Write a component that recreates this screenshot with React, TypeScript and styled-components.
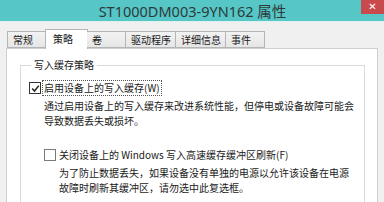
import React from "react";
import styled, { createGlobalStyle } from "styled-components";

const GlobalStyle = createGlobalStyle`
  html, body {
    margin: 0;
    padding: 0;
    width: 384px;
    height: 202px;
    overflow: hidden;
    background: #f0f0f0;
  }
  body {
    font-family: "Noto Sans CJK SC", "Noto Sans", sans-serif;
  }
`;

const Window = styled.div`
  width: 384px;
  height: 202px;
  display: flex;
  flex-direction: column;
  background: #f0f0f0;
  overflow: hidden;
`;

const TitleBar = styled.div`
  height: 21px;
  flex-shrink: 0;
  background: #56c6c7;
  border-bottom: 1px solid #dff0f0;
  position: relative;
  display: flex;
  justify-content: center;
  align-items: center;
`;

const Title = styled.div`
  font-family: "Noto Sans", "Noto Sans CJK SC", sans-serif;
  font-size: 14.5px;
  color: #2e3a3a;
  line-height: 21px;
  white-space: nowrap;
  padding: 2px 0 0 1px;
`;

const CloseButton = styled.div`
  position: absolute;
  top: 0;
  right: 0;
  width: 23px;
  height: 14px;
  background: #c94a4c;
  color: #fff;
  font-family: "DejaVu Sans", sans-serif;
  font-size: 10px;
  line-height: 14px;
  text-align: center;
`;

const TabStrip = styled.div`
  display: flex;
  align-items: flex-end;
  padding: 0 0 0 7px;
  margin-top: 7px;
  position: relative;
  z-index: 1;
`;

const Tab = styled.div<{ $active?: boolean }>`
  box-sizing: border-box;
  min-width: ${(p) => (p.$active ? "43px" : "39px")};
  height: ${(p) => (p.$active ? "20px" : "17px")};
  padding: 0 4px 0 ${(p) => (p.$active ? "7px" : "5px")};
  margin: ${(p) => (p.$active ? "0 -1px -1px" : "0")};
  background: ${(p) =>
    p.$active ? "#ffffff" : "linear-gradient(#f2f2f2, #e6e6e6)"};
  border: 1px solid #b5b5b5;
  border-bottom: ${(p) => (p.$active ? "none" : "1px solid #b5b5b5")};
  border-left-width: ${(p) => (p.$active ? "1px" : "0")};
  &:first-child {
    border-left-width: 1px;
  }
  font-size: 10px;
  color: #1a1a1a;
  line-height: ${(p) => (p.$active ? "17px" : "15px")};
  white-space: nowrap;
  display: flex;
  align-items: ${(p) => (p.$active ? "flex-start" : "center")};
`;

const Panel = styled.div`
  flex: 1;
  margin: 0 6px;
  background: #ffffff;
  border: 1px solid #cfcfcf;
  padding: 10px 12px 0 13px;
`;

const GroupBox = styled.fieldset`
  margin: 0;
  padding: 10px 0 0 8px;
  border: 1px solid #dadada;
  min-height: 200px;
`;

const Legend = styled.legend`
  font-size: 10px;
  color: #1a1a1a;
  padding: 0 3px;
  margin-left: 2px;
  line-height: 12px;
`;

const Option = styled.div<{ $indent?: number; $top?: number }>`
  display: flex;
  flex-direction: column;
  margin-left: ${(p) => p.$indent ?? 0}px;
  margin-top: ${(p) => p.$top ?? 0}px;
`;

const CheckRow = styled.label`
  display: flex;
  align-items: center;
  gap: 2px;
  font-size: 10px;
  color: #1a1a1a;
  line-height: 12px;
`;

const Box = styled.span<{ $checked?: boolean }>`
  width: 10px;
  height: 10px;
  flex-shrink: 0;
  border: 1px solid ${(p) => (p.$checked ? "#333333" : "#7a7a7a")};
  background: #fff;
  display: flex;
  align-items: center;
  justify-content: center;
`;

const LabelText = styled.span<{ $focused?: boolean }>`
  padding: 1px 1px;
  outline: ${(p) => (p.$focused ? "1px dotted #555" : "none")};
  white-space: nowrap;
`;

const Description = styled.div<{ $indent: number }>`
  margin-left: ${(p) => p.$indent}px;
  margin-top: 3px;
  font-size: 10px;
  line-height: 15px;
  color: #1a1a1a;
  white-space: nowrap;
`;

const Check = () => (
  <svg width="9" height="9" viewBox="0 0 9 9">
    <path d="M1.2 4.6 L3.5 7 L7.8 1.6" fill="none" stroke="#222" strokeWidth="1.5" />
  </svg>
);

const tabs = ["常规", "策略", "卷", "驱动程序", "详细信息", "事件"];

export default function App() {
  return (
    <>
      <GlobalStyle />
      <Window>
        <TitleBar>
          <Title>ST1000DM003-9YN162 属性</Title>
          <CloseButton>✕</CloseButton>
        </TitleBar>
        <TabStrip>
          {tabs.map((t) => (
            <Tab key={t} $active={t === "策略"}>
              {t}
            </Tab>
          ))}
        </TabStrip>
        <Panel>
          <GroupBox>
            <Legend>写入缓存策略</Legend>
            <Option>
              <CheckRow>
                <Box $checked>
                  <Check />
                </Box>
                <LabelText $focused>启用设备上的写入缓存(W)</LabelText>
              </CheckRow>
              <Description $indent={15}>
                通过启用设备上的写入缓存来改进系统性能，但停电或设备故障可能会
                <br />
                导致数据丢失或损坏。
              </Description>
            </Option>
            <Option $indent={15} $top={20}>
              <CheckRow>
                <Box />
                <LabelText>关闭设备上的 Windows 写入高速缓存缓冲区刷新(F)</LabelText>
              </CheckRow>
              <Description $indent={15}>
                为了防止数据丢失，如果设备没有单独的电源以允许该设备在电源
                <br />
                故障时刷新其缓冲区，请勿选中此复选框。
              </Description>
            </Option>
          </GroupBox>
        </Panel>
      </Window>
    </>
  );
}
